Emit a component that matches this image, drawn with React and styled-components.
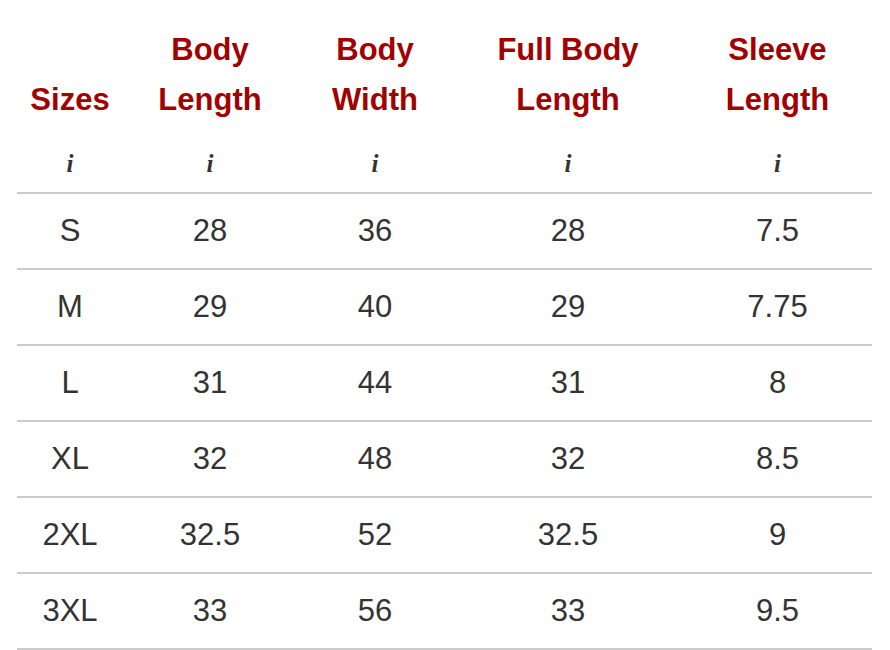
import React from 'react'
import styled, { createGlobalStyle } from 'styled-components'

const GlobalStyle = createGlobalStyle`
  html, body {
    margin: 0;
    padding: 0;
    background: #fff;
  }
`

const Root = styled.div`
  padding: 25px 0 0 17px;
  font-family: 'Liberation Sans', Arial, sans-serif;
`

const Table = styled.table`
  width: 855px;
  table-layout: fixed;
  border-collapse: collapse;
  border-spacing: 0;
`

const Head = styled.th`
  padding: 0;
  font-size: 31px;
  font-weight: bold;
  line-height: 50px;
  color: #a30000;
  text-align: center;
  vertical-align: bottom;
`

const Unit = styled.td`
  height: 68px;
  padding: 11px 0 0;
  box-sizing: border-box;
  font-family: 'Liberation Serif', 'Times New Roman', serif;
  font-size: 25px;
  font-weight: bold;
  font-style: italic;
  color: #333;
  text-align: center;
  vertical-align: middle;
  border-bottom: 2px solid #cbcbcb;
`

const Cell = styled.td`
  height: 74px;
  padding: 0;
  font-size: 31px;
  color: #333;
  text-align: center;
  vertical-align: middle;
  border-bottom: 2px solid #cbcbcb;
`

const columns = [
  { width: 106, label: ['Sizes'] },
  { width: 174, label: ['Body', 'Length'] },
  { width: 156, label: ['Body', 'Width'] },
  { width: 230, label: ['Full Body', 'Length'] },
  { width: 189, label: ['Sleeve', 'Length'] }
]

const rows = [
  ['S', '28', '36', '28', '7.5'],
  ['M', '29', '40', '29', '7.75'],
  ['L', '31', '44', '31', '8'],
  ['XL', '32', '48', '32', '8.5'],
  ['2XL', '32.5', '52', '32.5', '9'],
  ['3XL', '33', '56', '33', '9.5']
]

export default function App() {
  return (
    <Root>
      <GlobalStyle />
      <Table>
        <colgroup>
          {columns.map((c, i) => (
            <col key={i} style={{ width: c.width }} />
          ))}
        </colgroup>
        <thead>
          <tr>
            {columns.map((c, i) => (
              <Head key={i}>
                {c.label.map((line, j) => (
                  <React.Fragment key={j}>
                    {j > 0 && <br />}
                    {line}
                  </React.Fragment>
                ))}
              </Head>
            ))}
          </tr>
          <tr>
            {columns.map((c, i) => (
              <Unit key={i}>i</Unit>
            ))}
          </tr>
        </thead>
        <tbody>
          {rows.map((row, i) => (
            <tr key={i}>
              {row.map((v, j) => (
                <Cell key={j}>{v}</Cell>
              ))}
            </tr>
          ))}
        </tbody>
      </Table>
    </Root>
  )
}
